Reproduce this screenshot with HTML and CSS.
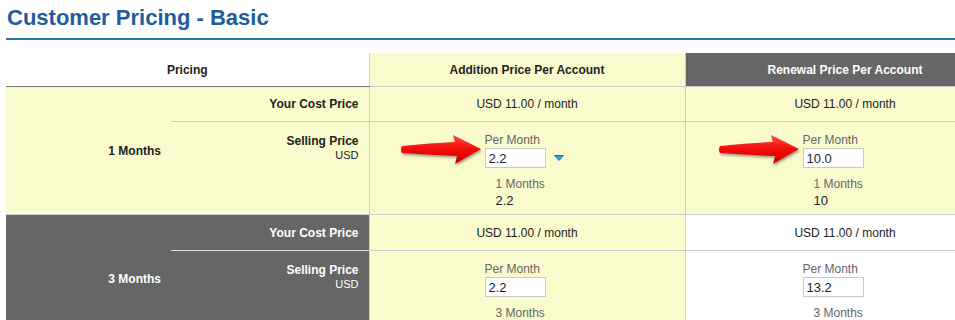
FILE: index.html
```html
<!DOCTYPE html>
<html lang="en">
<head>
  <meta charset="UTF-8" />
  <title>Customer Pricing - Basic</title>
  <meta name="viewport" content="width=device-width, initial-scale=1.0" />
  <link rel="stylesheet" href="styles.css">
</head>
<body>
  <h1 class="page-title">Customer Pricing - Basic</h1>

  <table class="pricing">
    <colgroup>
      <col class="col-months" />
      <col class="col-label" />
      <col class="col-add" />
      <col class="col-renew" />
    </colgroup>
    <thead>
      <tr>
        <th colspan="2" class="h-pricing">Pricing</th>
        <th class="h-add">Addition Price Per Account</th>
        <th class="h-renew">Renewal Price Per Account</th>
      </tr>
    </thead>

    <tbody class="term light">
      <tr class="cost-row">
        <td rowspan="2" class="months">1 Months</td>
        <td class="label">Your Cost Price</td>
        <td class="add">USD 11.00 / month</td>
        <td class="renew">USD 11.00 / month</td>
      </tr>
      <tr class="sell-row">
        <td class="label"><div class="sell-label">Selling Price<span class="cur">USD</span></div></td>
        <td class="add">
          <div class="price-box">
            <svg class="arrow" width="84" height="34" viewBox="0 0 84 34"><use href="#red-arrow" /></svg>
            <div class="per">Per Month</div>
            <div class="field">
              <input type="text" value="2.2" />
              <svg class="drop" width="10" height="6" viewBox="0 0 10 6"><path d="M0.5 0.5 H9.5 L5 5.5 Z" fill="#2ba3dc" stroke="#1574a8" stroke-width="1" /></svg>
            </div>
            <div class="period">1 Months</div>
            <div class="total">2.2</div>
          </div>
        </td>
        <td class="renew">
          <div class="price-box">
            <svg class="arrow" width="84" height="34" viewBox="0 0 84 34"><use href="#red-arrow" /></svg>
            <div class="per">Per Month</div>
            <div class="field"><input type="text" value="10.0" /></div>
            <div class="period">1 Months</div>
            <div class="total">10</div>
          </div>
        </td>
      </tr>
    </tbody>

    <tbody class="term dark">
      <tr class="cost-row">
        <td rowspan="2" class="months">3 Months</td>
        <td class="label">Your Cost Price</td>
        <td class="add">USD 11.00 / month</td>
        <td class="renew">USD 11.00 / month</td>
      </tr>
      <tr class="sell-row">
        <td class="label"><div class="sell-label">Selling Price<span class="cur">USD</span></div></td>
        <td class="add">
          <div class="price-box">
            <div class="per">Per Month</div>
            <div class="field"><input type="text" value="2.2" /></div>
            <div class="period">3 Months</div>
            <div class="total">6.6</div>
          </div>
        </td>
        <td class="renew">
          <div class="price-box">
            <div class="per">Per Month</div>
            <div class="field"><input type="text" value="13.2" /></div>
            <div class="period">3 Months</div>
            <div class="total">39.6</div>
          </div>
        </td>
      </tr>
    </tbody>
  </table>

  <svg width="0" height="0" class="defs">
    <defs>
      <linearGradient id="arrow-fill" x1="0" y1="0" x2="0" y2="1">
        <stop offset="0" stop-color="#ff4a3a" />
        <stop offset="0.5" stop-color="#f40a0a" />
        <stop offset="1" stop-color="#c80000" />
      </linearGradient>
      <path id="red-arrow" d="M2 13 Q30 10 55 9 L53 2 L81 16 L55 31 L57 23 Q30 22 2 20 Q0 16.5 2 13 Z" fill="url(#arrow-fill)" />
    </defs>
  </svg>
</body>
</html>
```

FILE: styles.css
```css
html, body {
  overflow: hidden;
}
body {
  font-family: 'Liberation Sans', Arial, sans-serif;
  background: #fff;
  color: #222;
  margin: 0;
  padding: 0 0 0 6px;
  width: 1010px;
}
.page-title {
  margin: 0;
  padding: 5px 0 7px 1px;
  font-size: 22px;
  line-height: 26px;
  color: #1d5d9d;
  border-bottom: 2px solid #2677ac;
  width: 949px;
}
.pricing {
  margin-top: 13px;
  width: 999px;
  table-layout: fixed;
  border-collapse: collapse;
  font-size: 12px;
}
.col-months { width: 165px; }
.col-label { width: 198px; }
.col-add { width: 316px; }
.col-renew { width: 320px; }

.pricing th {
  height: 33px;
  padding: 0;
  font-weight: bold;
  text-align: center;
  border: 1px solid #ccc;
  border-top: none;
}
.h-pricing {
  background: #fff;
  border-left: none !important;
  border-bottom: 1px solid #777 !important;
}
.h-add { background: #f9fbcd; }
.h-renew {
  background: #666;
  color: #fff;
}

.pricing td {
  padding: 0;
  border: 1px solid #ccc;
  text-align: center;
}
.pricing td.months {
  border-left: none;
  border-right: none;
  text-align: right;
  padding-right: 10px;
  font-weight: bold;
  vertical-align: middle;
}
.pricing td.label {
  border-left: none;
  text-align: right;
  padding-right: 10px;
  font-weight: bold;
}
.cost-row td {
  height: 34px;
}
.dark .cost-row td {
  height: 35px;
}
.sell-row td {
  height: 92px;
  vertical-align: top;
}
.sell-label {
  padding-top: 12px;
}
.cur {
  display: block;
  font-weight: normal;
  font-size: 11px;
  line-height: 14px;
}

.light td { background: #f9fbcd; }
.dark td.months, .dark td.label {
  background: #666;
  color: #fff;
}
.dark td.label { border-bottom-color: #ddd; }
.dark td.add { background: #f9fbcd; }
.dark td.renew { background: #fff; }

.price-box {
  position: relative;
  display: inline-block;
  width: 85px;
  text-align: left;
  padding-top: 10px;
}
.per {
  color: #666;
  line-height: 16px;
}
.field {
  display: flex;
  align-items: center;
  gap: 8px;
  height: 20px;
}
.field input {
  box-sizing: border-box;
  width: 61px;
  height: 20px;
  margin: 0;
  padding: 0 3px;
  border: 1px solid #c8c8c8;
  background: #fff;
  font-family: 'Liberation Sans', Arial, sans-serif;
  font-size: 13px;
  color: #222;
}
.period {
  color: #666;
  padding-left: 11px;
  margin-top: 8px;
  line-height: 16px;
}
.total {
  padding-left: 11px;
  line-height: 17px;
  font-size: 13px;
}
.arrow {
  position: absolute;
  left: -85px;
  top: 11px;
  filter: drop-shadow(1px 2px 1px rgba(0, 0, 0, 0.35));
}
.defs {
  position: absolute;
}
```
